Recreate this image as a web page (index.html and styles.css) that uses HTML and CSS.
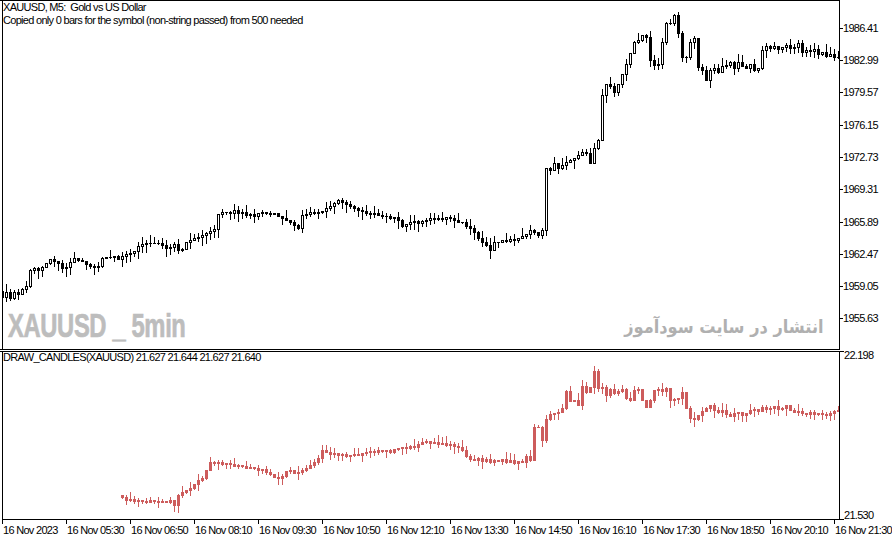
FILE: index.html
```html
<!DOCTYPE html>
<html lang="en">
<head>
<meta charset="utf-8">
<title>XAUUSD, M5</title>
<link rel="stylesheet" href="styles.css">
</head>
<body>
<div class="terminal">
  <div class="gutter gutter-main"></div>
  <div class="pane main-pane">
    <svg id="main-candles" class="candles" width="836" height="348" viewBox="3 1 836 348"></svg>
    <div class="legend">XAUUSD, M5:  Gold vs US Dollar
Copied only 0 bars for the symbol (non-string passed) from 500 needed</div>
    <div class="wm-symbol">XAUUSD _ 5min</div>
    <div class="wm-site" dir="rtl" lang="fa">انتشار در سایت سودآموز</div>
  </div>
  <div class="price-axis">
    <div class="lbl"><span class="tick"></span><span>1986.41</span></div>
    <div class="lbl"><span class="tick"></span><span>1982.99</span></div>
    <div class="lbl"><span class="tick"></span><span>1979.57</span></div>
    <div class="lbl"><span class="tick"></span><span>1976.15</span></div>
    <div class="lbl"><span class="tick"></span><span>1972.73</span></div>
    <div class="lbl"><span class="tick"></span><span>1969.31</span></div>
    <div class="lbl"><span class="tick"></span><span>1965.89</span></div>
    <div class="lbl"><span class="tick"></span><span>1962.47</span></div>
    <div class="lbl"><span class="tick"></span><span>1959.05</span></div>
    <div class="lbl"><span class="tick"></span><span>1955.63</span></div>
  </div>
  <div class="gutter gutter-ind"></div>
  <div class="pane ind-pane">
    <svg id="ind-candles" class="candles" width="836" height="167" viewBox="3 352 836 167"></svg>
    <div class="legend ind-legend">DRAW_CANDLES(XAUUSD) 21.627 21.644 21.627 21.640</div>
  </div>
  <div class="ind-axis">
    <div class="lbl top"><span class="tick"></span><span>22.198</span></div>
    <div class="lbl bottom"><span class="tick"></span><span>21.530</span></div>
  </div>
  <div class="time-axis">
    <div class="tl"><span>16 Nov 2023</span></div>
    <div class="tl"><span>16 Nov 05:30</span></div>
    <div class="tl"><span>16 Nov 06:50</span></div>
    <div class="tl"><span>16 Nov 08:10</span></div>
    <div class="tl"><span>16 Nov 09:30</span></div>
    <div class="tl"><span>16 Nov 10:50</span></div>
    <div class="tl"><span>16 Nov 12:10</span></div>
    <div class="tl"><span>16 Nov 13:30</span></div>
    <div class="tl"><span>16 Nov 14:50</span></div>
    <div class="tl"><span>16 Nov 16:10</span></div>
    <div class="tl"><span>16 Nov 17:30</span></div>
    <div class="tl"><span>16 Nov 18:50</span></div>
    <div class="tl"><span>16 Nov 20:10</span></div>
    <div class="tl last"><span>16 Nov 21:30</span></div>
  </div>
</div>
<script src="script.js"></script>
</body>
</html>
```
FILE: styles.css
```css
* { box-sizing: border-box; }
html, body { margin: 0; padding: 0; background: #fff; }
body {
  font-family: "Liberation Sans", Arial, sans-serif;
  font-size: 11px;
  letter-spacing: -0.7px;
  color: #000;
}
.terminal {
  width: 892px;
  height: 541px;
  display: grid;
  grid-template-columns: 2px 838px 52px;
  grid-template-rows: 350px 1px 169px 21px;
  overflow: hidden;
}
.gutter-main { grid-column: 1; grid-row: 1; border-top: 1px solid #000; border-bottom: 1px solid #000; }
.gutter-ind { grid-column: 1; grid-row: 3; border-top: 1px solid #000; }
.pane {
  position: relative;
  border: 1px solid #000;
  overflow: hidden;
}
.main-pane { grid-column: 2; grid-row: 1; }
.ind-pane { grid-column: 2; grid-row: 3; }
.candles { position: absolute; left: 0; top: 0; shape-rendering: crispEdges; }
.legend {
  position: relative;
  line-height: 13px;
  white-space: pre;
}
.ind-legend { line-height: 11px; }
.wm-symbol {
  position: absolute;
  left: 5px;
  top: 309px;
  font-weight: bold;
  font-size: 33px;
  line-height: 32px;
  letter-spacing: -0.5px;
  color: #bdbdbd;
  -webkit-text-stroke: 0.7px #bdbdbd;
  white-space: pre;
  transform: scaleX(0.72);
  transform-origin: left center;
}
.wm-site {
  position: absolute;
  right: 15px;
  top: 316px;
  font-family: "DejaVu Sans", sans-serif;
  font-weight: bold;
  font-size: 18px;
  line-height: 20px;
  letter-spacing: 0;
  color: #b0b0b0;
  white-space: nowrap;
  transform: scaleX(0.9);
  transform-origin: right center;
}
.price-axis {
  grid-column: 3;
  grid-row: 1;
  display: flex;
  flex-direction: column;
  padding-top: 12.15px;
}
.price-axis .lbl {
  height: 32.3px;
  flex: none;
  display: flex;
  align-items: center;
  line-height: 13px;
}
.tick { flex: none; width: 3px; height: 1px; background: #000; }
.ind-axis {
  grid-column: 3;
  grid-row: 3;
  display: flex;
  flex-direction: column;
  justify-content: space-between;
}
.ind-axis .lbl { display: flex; line-height: 9px; }
.ind-axis .lbl.top { align-items: flex-start; }
.ind-axis .lbl.bottom { align-items: flex-end; }
.ind-axis .tick { width: 4px; }
.time-axis {
  grid-column: 1 / -1;
  grid-row: 4;
  display: flex;
  padding-left: 2px;
  overflow: hidden;
  white-space: nowrap;
}
.tl { flex: none; width: 64px; }
.tl.last { width: 56px; }
.tl::before { content: ""; display: block; width: 1px; height: 4px; background: #000; }
.tl span { display: block; line-height: 13px; padding-left: 1px; }
```
FILE: script.js
```js
(function () {
  var NS = "http://www.w3.org/2000/svg";

  // close prices expressed as pixel rows, one per 5-minute bar (4px apart)
  var mainCloses = [297,292,298,292,294,289,286,270,268,270,267,263,259,261,263,268,267,262,258,260,261,264,266,267,266,258,257,257,256,259,256,254,253,251,246,244,243,243,243,243,245,248,247,244,250,249,242,240,238,237,235,233,231,229,214,212,212,213,210,213,212,215,214,216,213,212,213,214,213,216,218,220,222,225,228,215,214,212,213,212,211,208,206,203,200,202,204,206,208,210,211,213,214,213,215,216,216,218,217,220,226,224,222,221,223,221,220,218,219,218,219,217,218,220,222,222,226,228,232,238,242,245,250,242,242,240,241,239,240,238,236,234,230,232,235,230,168,170,163,168,165,162,160,158,155,152,153,163,148,140,95,84,86,92,84,74,64,53,42,40,35,37,60,65,64,42,23,23,15,33,57,57,42,38,67,70,80,70,68,72,66,65,62,68,62,66,68,64,70,68,50,46,48,46,49,47,45,48,47,43,52,50,51,49,54,52,56,54,57,57];

  var indCloses = [497,500,499,501,500,501,502,500,501,502,501,502,500,505,495,492,490,488,484,480,478,470,462,463,462,464,463,464,466,465,466,468,467,468,470,469,472,474,477,478,476,471,470,473,472,470,468,465,462,458,450,452,454,453,455,454,456,455,454,455,453,452,451,452,450,451,450,452,449,448,447,448,446,447,444,442,441,443,442,444,443,445,444,446,447,450,456,459,460,458,461,459,462,460,461,459,462,460,463,461,462,456,460,427,427,440,419,414,413,412,408,391,401,400,405,386,392,387,371,388,387,395,389,393,391,389,398,400,390,389,400,407,400,390,389,391,388,400,399,398,392,408,418,419,415,411,408,405,410,412,410,414,416,413,412,415,413,410,409,411,407,409,408,406,409,408,405,410,412,411,413,414,412,414,413,414,415,413,411,410];

  function rng(seed) {
    return function () {
      seed = (seed + 0x6D2B79F5) | 0;
      var t = Math.imul(seed ^ (seed >>> 15), 1 | seed);
      t = (t + Math.imul(t ^ (t >>> 7), 61 | t)) ^ t;
      return ((t ^ (t >>> 14)) >>> 0) / 4294967296;
    };
  }

  function rect(parent, x, y, w, h, fill) {
    var r = document.createElementNS(NS, "rect");
    r.setAttribute("x", x);
    r.setAttribute("y", y);
    r.setAttribute("width", w);
    r.setAttribute("height", h);
    r.setAttribute("fill", fill);
    parent.appendChild(r);
  }

  function draw(id, closes, startX, o) {
    var svg = document.getElementById(id);
    var rand = rng(o.seed);
    var prev = closes[0] + o.firstOpen;
    for (var i = 0; i < closes.length; i++) {
      var cx = startX + 4 * i;
      var open = Math.round(prev);
      var close = Math.round(closes[i]);
      prev = closes[i];
      var top = Math.min(open, close);
      var bot = Math.max(open, close);
      var hi = top - Math.round(Math.pow(rand(), 1.7) * o.wick);
      var lo = bot + Math.round(Math.pow(rand(), 1.7) * o.wick);
      rect(svg, cx, hi, 1, lo - hi + 1, o.color);
      rect(svg, cx - 1, top, 3, bot - top + 1, o.color);
      if (o.hollow && close < open && bot - top >= 2) {
        rect(svg, cx, top + 1, 1, bot - top - 1, "#fff");
      }
    }
  }

  draw("main-candles", mainCloses, 2, { seed: 7, wick: 8, color: "#000", hollow: true, firstOpen: -6 });
  draw("ind-candles", indCloses, 122, { seed: 19, wick: 7, color: "#cd5c5c", hollow: false, firstOpen: -2 });
})();
```
